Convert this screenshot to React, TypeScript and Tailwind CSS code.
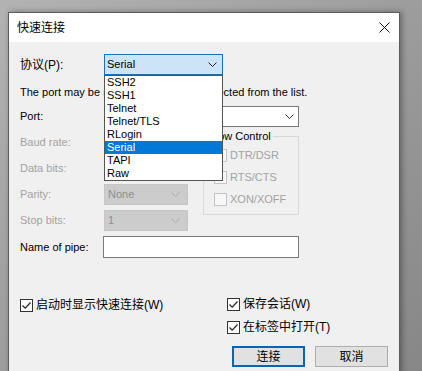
import type { ReactNode } from 'react';

const font = "font-['Liberation_Sans','Noto_Sans_CJK_SC',sans-serif]";

const protocols = ['SSH2', 'SSH1', 'Telnet', 'Telnet/TLS', 'RLogin', 'Serial', 'TAPI', 'Raw'];

function Chevron({ color = '#333' }: { color?: string }) {
  return (
    <svg width="9" height="5" viewBox="0 0 9 5" className="shrink-0">
      <path d="M0.5 0.5 L4.5 4.5 L8.5 0.5" fill="none" stroke={color} strokeWidth="1" />
    </svg>
  );
}

function CheckBox({ checked, disabled, children }: { checked?: boolean; disabled?: boolean; children: ReactNode }) {
  return (
    <div className="flex h-[16px] items-center">
      <div
        className={
          disabled
            ? 'flex h-[13px] w-[13px] items-center justify-center border border-[#c4c4c4] bg-[#f7f7f7]'
            : 'flex h-[13px] w-[13px] items-center justify-center border border-[#333] bg-white'
        }
      >
        {checked && (
          <svg width="11" height="11" viewBox="0 0 11 11">
            <path d="M1.5 5.5 L4.2 8.2 L9.5 2.5" fill="none" stroke="#222" strokeWidth="1.2" />
          </svg>
        )}
      </div>
      <span className={disabled ? 'ml-[3px] text-[11px] text-[#a3a3a3]' : 'ml-[3px] text-[12px] text-black'}>
        {children}
      </span>
    </div>
  );
}

function DisabledSelect({ value }: { value?: string }) {
  return (
    <div className="flex h-[21px] w-[84px] items-center justify-between border border-[#c6c6c6] bg-[#cccccc] pl-[3px] pr-[7px] text-[11px] text-[#8e8e8e]">
      <span>{value}</span>
      <Chevron color="#a8a8a8" />
    </div>
  );
}

function FormRow({ label, disabled, children }: { label: string; disabled?: boolean; children: ReactNode }) {
  return (
    <div className="flex h-[21px] items-center">
      <span className={disabled ? 'w-[84px] text-[11px] text-[#a3a3a3]' : 'w-[84px] text-[11px] text-black'}>
        {label}
      </span>
      {children}
    </div>
  );
}

export default function App() {
  return (
    <div className={`h-[371px] w-[422px] overflow-hidden bg-linear-to-br from-[#b3b3b3] to-[#878787] pl-[8px] pt-[12px] ${font}`}>
      <div className="h-[380px] w-[392px] border border-[#5c5c5c] bg-[#f0f0f0] shadow-[2px_0_6px_rgba(0,0,0,0.35)]">
        {/* Title bar */}
        <div className="flex h-[29px] items-center justify-between bg-white pl-[8px] pr-[9px]">
          <span className="text-[12px] text-black">快速连接</span>
          <svg width="11" height="11" viewBox="0 0 11 11">
            <path d="M0.5 0.5 L10.5 10.5 M10.5 0.5 L0.5 10.5" stroke="#111" strokeWidth="1" />
          </svg>
        </div>

        {/* Body */}
        <div className="flex flex-col pl-[11px] pt-[12px]">
          <div className="flex h-[21px] items-center">
            <span className="w-[84px] text-[12px] text-black">协议(P):</span>
            <div className="relative">
              <div className="flex h-[21px] w-[119px] items-center justify-between border border-[#1f6fb5] bg-[#cce4f7] pl-[2px] pr-[5px] text-[11px] text-black">
                <span>Serial</span>
                <Chevron color="#222" />
              </div>
              {/* open dropdown list */}
              <div className="absolute left-0 top-full z-10 w-[119px] border border-[#555] bg-white">
                {protocols.map((p) => (
                  <div
                    key={p}
                    className={
                      p === 'Serial'
                        ? 'h-[13px] bg-[#0078d7] pl-[2px] text-[11px] leading-[13px] text-white'
                        : 'h-[13px] pl-[2px] text-[11px] leading-[13px] text-black'
                    }
                  >
                    {p}
                  </div>
                ))}
              </div>
            </div>
          </div>

          <div className="mt-[10px] h-[15px] text-[11px] leading-[15px] text-black">
            The port may be manually entered or selected from the list.
          </div>

          <div className="mt-[6px]">
            <FormRow label="Port:">
              <div className="flex h-[21px] w-[195px] items-center justify-end border border-[#7a7a7a] bg-white pr-[4px]">
                <Chevron color="#333" />
              </div>
            </FormRow>
          </div>

          <div className="mt-[5px] flex">
            <div className="flex flex-col gap-[5px]">
              <FormRow label="Baud rate:" disabled>
                <DisabledSelect />
              </FormRow>
              <FormRow label="Data bits:" disabled>
                <DisabledSelect />
              </FormRow>
              <FormRow label="Parity:" disabled>
                <DisabledSelect value="None" />
              </FormRow>
              <FormRow label="Stop bits:" disabled>
                <DisabledSelect value="1" />
              </FormRow>
            </div>
            <fieldset className="-mt-[3px] ml-[15px] h-[86px] w-[96px] border border-[#d9d9d9]">
              <legend className="ml-[3px] h-[14px] px-[2px] text-[11px] leading-[14px] text-black">Flow Control</legend>
              <div className="mt-[4px] flex flex-col gap-[6px] pl-[10px]">
                <CheckBox disabled>DTR/DSR</CheckBox>
                <CheckBox disabled>RTS/CTS</CheckBox>
                <CheckBox disabled>XON/XOFF</CheckBox>
              </div>
            </fieldset>
          </div>

          <div className="mt-[5px] flex h-[22px] items-center">
            <span className="w-[83px] text-[11px] text-black">Name of pipe:</span>
            <div className="h-[22px] w-[196px] border border-[#7a7a7a] bg-white" />
          </div>

          <div className="mt-[38px] flex">
            <div className="w-[207px] pt-[1px]">
              <CheckBox checked>启动时显示快速连接(W)</CheckBox>
            </div>
            <div className="flex flex-col">
              <CheckBox checked>保存会话(W)</CheckBox>
              <div className="mt-[7px]">
                <CheckBox checked>在标签中打开(T)</CheckBox>
              </div>
              <div className="ml-[5px] mt-[11px] flex gap-[10px]">
                <button className="flex h-[21px] w-[73px] items-center justify-center border-2 border-[#0a64b4] bg-[#e1e1e1] text-[12px] text-black">
                  连接
                </button>
                <button className="flex h-[21px] w-[73px] items-center justify-center border border-[#adadad] bg-[#e1e1e1] text-[12px] text-black">
                  取消
                </button>
              </div>
            </div>
          </div>
        </div>
      </div>
    </div>
  );
}
